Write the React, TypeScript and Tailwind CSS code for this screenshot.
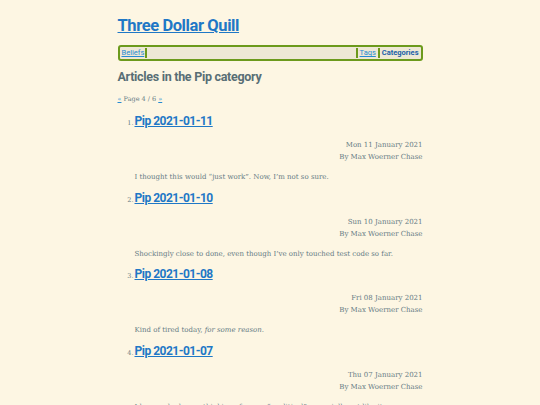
import React from "react";

const items = [
  { n: 1, title: "Pip 2021-01-11", date: "Mon 11 January 2021", body: <>I thought this would “just work”. Now, I’m not so sure.</> },
  { n: 2, title: "Pip 2021-01-10", date: "Sun 10 January 2021", body: <>Shockingly close to done, even though I’ve only touched test code so far.</> },
  { n: 3, title: "Pip 2021-01-08", date: "Fri 08 January 2021", body: <>Kind of tired today, <em>for some reason</em>.</> },
  { n: 4, title: "Pip 2021-01-07", date: "Thu 07 January 2021", body: <>I hope nobody was thinking of me as “apolitical”, especially not like it was a good thing.</> },
];

const sans = { fontFamily: 'Roboto, "Open Sans", sans-serif' };

export default function App() {
  return (
    <div className="min-h-[405px] bg-[#fdf6e3] text-[#657b83]" style={{ fontFamily: '"DejaVu Serif", "Liberation Serif", serif' }}>
      <div className="mx-auto w-[305px] pt-[14px]">
        <h1 className="text-[16.5px] font-bold leading-[24px] tracking-[-0.4px]" style={sans}>
          <a href="#" className="text-[#1f78c6] underline">Three Dollar Quill</a>
        </h1>
        <nav className="mt-[7px] flex h-[16px] items-center rounded-[3px] border-2 border-[#6c9a1c] bg-[#eee8d5] px-[2px] text-[7.5px] leading-none" style={sans}>
          <a href="#" className="text-[#268bd2] underline">Beliefs</a>
          <span className="ml-[1px] h-[10px] w-[2px] bg-[#6c9a1c]" />
          <span className="flex-1" />
          <span className="mr-[2px] h-[10px] w-[2px] bg-[#6c9a1c]" />
          <a href="#" className="text-[#268bd2] underline">Tags</a>
          <span className="mx-[2px] h-[10px] w-[2px] bg-[#6c9a1c]" />
          <a href="#" className="font-bold text-[#1b5fa8]">Categories</a>
        </nav>
        <h2 className="mt-[7px] text-[12.5px] font-bold leading-[18px] tracking-[-0.3px] text-[#586e75]" style={sans}>Articles in the Pip category</h2>
        <p className="mt-[8px] text-[6.5px] leading-[10px]">
          <a href="#" className="text-[#268bd2] underline">«</a> Page 4 / 6 <a href="#" className="text-[#268bd2] underline">»</a>
        </p>
        <ol className="mt-[8px]">
          {items.map((it) => (
            <li key={it.n} className="mb-[5.5px] flex flex-col">
              <div className="flex items-baseline">
                <span className="w-[17px] pr-[1px] text-right text-[6.5px]">{it.n}.</span>
                <a href="#" className="text-[12px] font-bold leading-[18px] tracking-[-0.5px] text-[#1f78c6] underline" style={sans}>{it.title}</a>
              </div>
              <div className="mt-[9px] text-right text-[7px] leading-[12px]">
                <div>{it.date}</div>
                <div>By Max Woerner Chase</div>
              </div>
              <p className="ml-[17px] mt-[9px] text-[7px] leading-[11px]">{it.body}</p>
            </li>
          ))}
        </ol>
      </div>
    </div>
  );
}
